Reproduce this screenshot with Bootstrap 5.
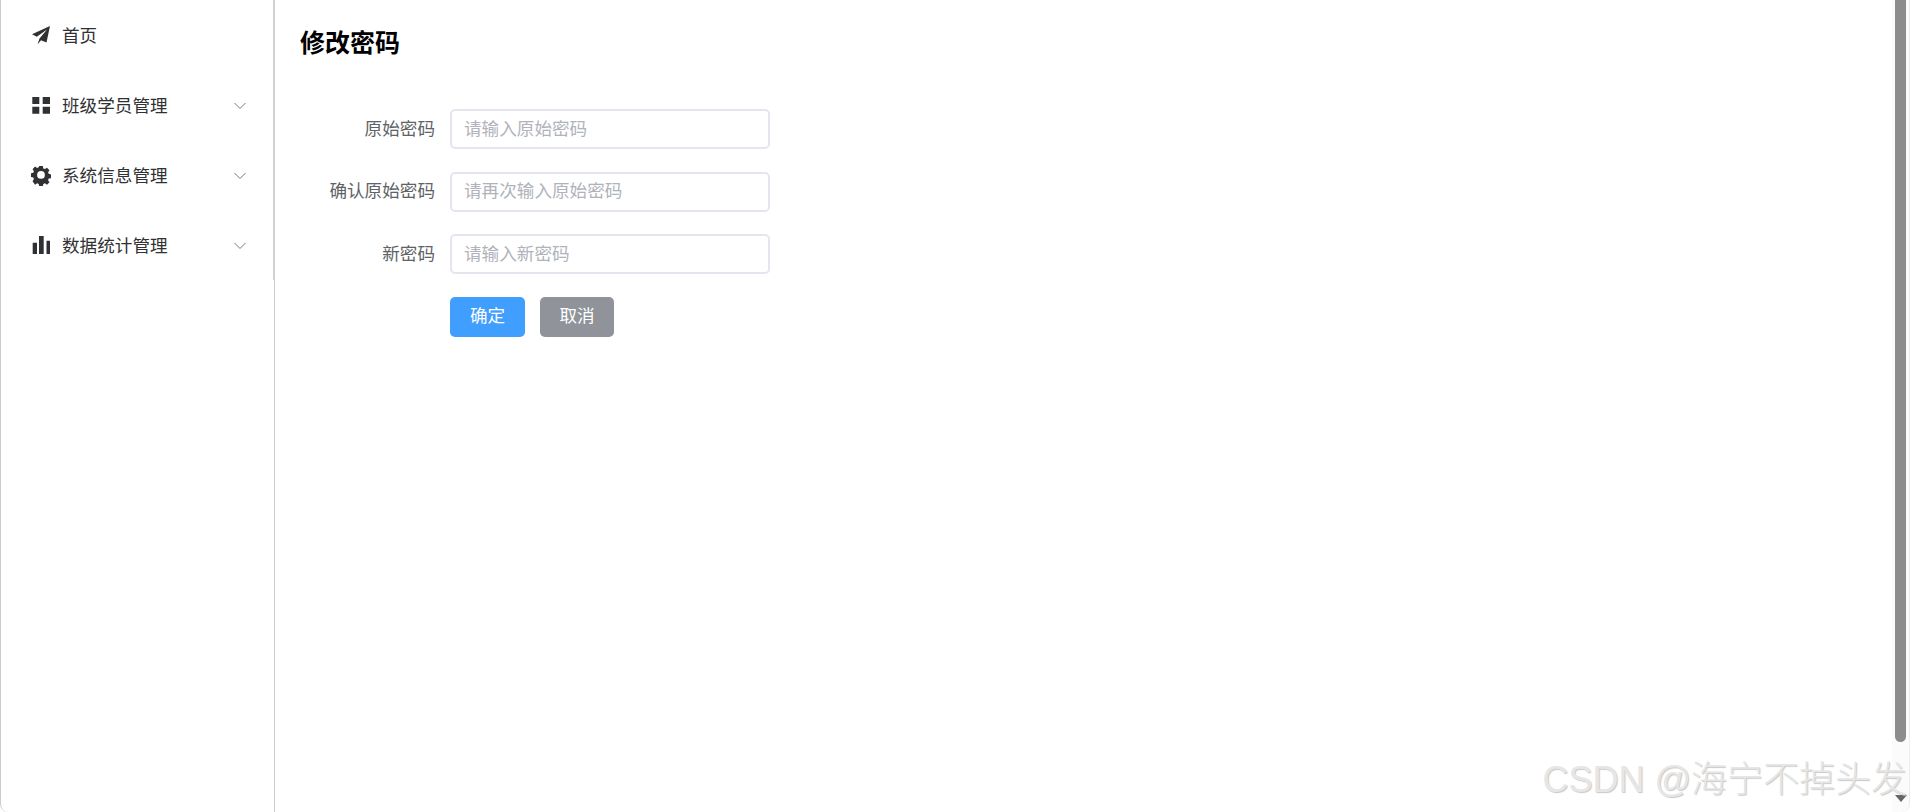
<!DOCTYPE html>
<html lang="zh-CN">
<head>
  <meta charset="UTF-8" />
  <meta name="viewport" content="width=device-width, initial-scale=1" />
  <title>修改密码</title>
  <link href="https://cdn.jsdelivr.net/npm/bootstrap@5.3.0/dist/css/bootstrap.min.css" rel="stylesheet" />
  <style>
    html, body { height: 100%; overflow: hidden; }
    body { font-family: "Liberation Sans", "Noto Sans CJK SC", sans-serif; font-size: 17.6px; background: #fff; }
    .app-frame { height: 812px; border-left: 1px solid #ccc; border-bottom-left-radius: 8px; }
    .side-col { width: 274px; flex: none; border-right: 1px solid #ccc; }
    .side-menu { height: 280px; border-right: 2px solid #d0d0d0; margin-right: -1px; }
    .menu-row { height: 70px; padding: 2px 25px 0 30px; color: #303133; }
    .menu-row svg.menu-icon { width: 20px; height: 20px; margin-right: 11px; flex: none; fill: #303133; }
    .menu-row .menu-arrow { width: 16px; height: 16px; flex: none; fill: none; stroke: #777; stroke-width: 1; }
    .main-col { padding: 27px 25px; }
    .page-title { font-size: 25px; line-height: 32px; font-weight: 700; color: #000; margin: 0 0 50px; }
    .pwd-row { height: 40px; margin-bottom: 22.5px; }
    .pwd-label { width: 150px; padding-right: 15px; text-align: right; color: #606266; flex: none; margin: 0; }
    .pwd-input { width: 320px; height: 40px; padding: 0 12px; border: 2px solid #e4e6ee; border-radius: 5px; font-size: 17.6px; color: #606266; }
    .pwd-input::placeholder { color: #b0b3ba; opacity: 1; }
    .pwd-input:focus { outline: none; border-color: #409eff; }
    .pwd-actions { padding-left: 150px; gap: 15px; }
    .act-btn { height: 40px; width: 75px; padding: 0; border: 0; border-radius: 5px; font-size: 17.6px; color: #fff; }
    .act-ok { background: #409eff; }
    .act-cancel { background: #909399; width: 74px; }
    .scroll-track { position: absolute; right: 1px; top: 0; width: 18px; height: 812px; background: #fbfbfb; border-right: 1px solid #ececec; border-bottom-right-radius: 8px; }
    .scroll-thumb { position: absolute; right: 5px; top: 0; width: 11px; height: 742px; background: #8c8c8c; border-radius: 0 0 6px 6px; }
    .scroll-arrow { position: absolute; right: 4px; top: 795px; width: 0; height: 0; border-left: 6px solid transparent; border-right: 6px solid transparent; border-top: 7px solid #666; }
    .watermark { position: absolute; right: 4px; top: 757px; font-size: 36px; line-height: 46px; font-weight: 300; color: #e6e6e6; text-shadow: 1px 1px 1px #c8c8c8; white-space: nowrap; }
  </style>
</head>
<body>
  <div class="app-frame d-flex position-relative">

    <!-- Sidebar -->
    <div class="side-col">
      <div class="side-menu">
        <div class="menu-row d-flex align-items-center">
          <svg class="menu-icon" viewBox="0 0 20 20"><path d="M19 0 1 8.300l4.800 2.500L16 3.500 8.500 12.500 6.500 18.500l3.500-4.300 5.500 2.300z"/></svg>
          <span>首页</span>
        </div>
        <div class="menu-row d-flex align-items-center">
          <svg class="menu-icon" viewBox="0 0 20 20"><path d="M1.300 1h7v7h-7zM11.700 1h7.300v7h-7.300zM1.300 10.800h7v7h-7zM11.700 10.800h7.300v7h-7.300z"/></svg>
          <span>班级学员管理</span>
          <svg class="menu-arrow ms-auto" viewBox="0 0 16 16"><path d="M2.500 5 8 10.500 13.500 5"/></svg>
        </div>
        <div class="menu-row d-flex align-items-center">
          <svg class="menu-icon" viewBox="0 0 20 20"><path fill-rule="evenodd" d="M8 .5h4l.5 2.700 1.700.7 2.300-1.500 2.700 2.800-1.500 2.200.7 1.700 2.600.6v4l-2.600.5-.7 1.700 1.500 2.300-2.700 2.700-2.300-1.500-1.700.7-.5 2.600H8l-.5-2.600-1.700-.7-2.300 1.500L.8 17l1.500-2.300-.7-1.700L-1 12.500v-4l2.600-.6.7-1.700L.8 4 3.500 1.200l2.300 1.500 1.700-.7zM10 6a4.200 4.200 0 1 0 0 8.400A4.200 4.200 0 0 0 10 6z" transform="translate(.8 -.5) scale(.92)"/></svg>
          <span>系统信息管理</span>
          <svg class="menu-arrow ms-auto" viewBox="0 0 16 16"><path d="M2.500 5 8 10.500 13.500 5"/></svg>
        </div>
        <div class="menu-row d-flex align-items-center">
          <svg class="menu-icon" viewBox="0 0 20 20"><path d="M1.700 6.700h4.300V18H1.700zM8 0h4.700v18H8zM15.500 4.700H19V18h-3.500z"/></svg>
          <span>数据统计管理</span>
          <svg class="menu-arrow ms-auto" viewBox="0 0 16 16"><path d="M2.500 5 8 10.500 13.500 5"/></svg>
        </div>
      </div>
    </div>

    <!-- Main -->
    <div class="main-col flex-grow-1">
      <h2 class="page-title">修改密码</h2>
      <form>
        <div class="pwd-row d-flex align-items-center">
          <label class="pwd-label">原始密码</label>
          <input class="pwd-input" type="password" placeholder="请输入原始密码" />
        </div>
        <div class="pwd-row d-flex align-items-center">
          <label class="pwd-label">确认原始密码</label>
          <input class="pwd-input" type="password" placeholder="请再次输入原始密码" />
        </div>
        <div class="pwd-row d-flex align-items-center">
          <label class="pwd-label">新密码</label>
          <input class="pwd-input" type="password" placeholder="请输入新密码" />
        </div>
        <div class="pwd-actions d-flex">
          <button type="button" class="act-btn act-ok">确定</button>
          <button type="button" class="act-btn act-cancel">取消</button>
        </div>
      </form>
    </div>

    <div class="scroll-track"></div>
    <div class="scroll-thumb"></div>
    <div class="scroll-arrow"></div>
    <div class="watermark">CSDN @海宁不掉头发</div>
  </div>
</body>
</html>
